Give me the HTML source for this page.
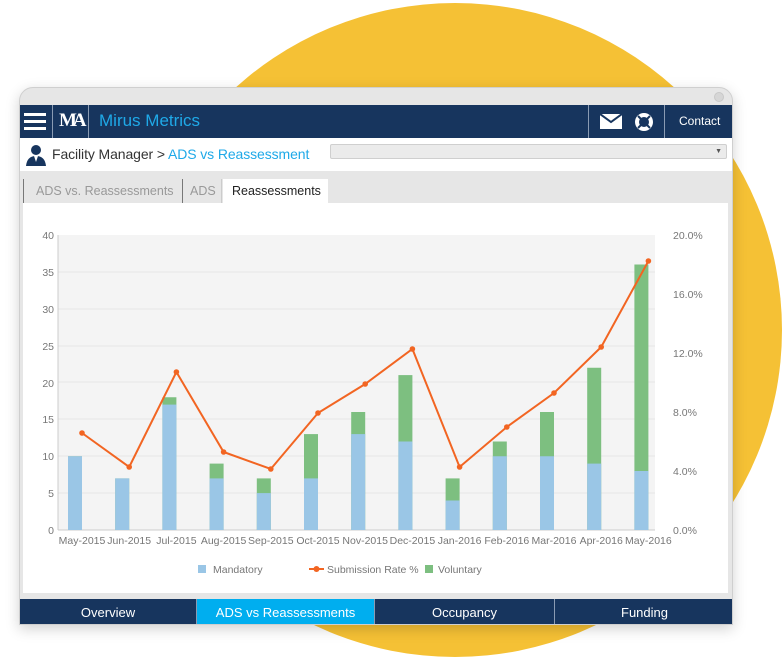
<!DOCTYPE html>
<html><head><meta charset="utf-8"><style>
*{margin:0;padding:0;box-sizing:border-box}
body{width:783px;height:660px;background:#fff;position:relative;overflow:hidden;font-family:"Liberation Sans","DejaVu Sans",sans-serif}
.abs{position:absolute}
#win{left:19px;top:87px;width:714px;height:538px;background:#e6e6e6;border-radius:14px 14px 0 0;box-shadow:0 4px 14px rgba(0,0,0,0.18);border:1px solid #cfcfcf;overflow:hidden}
.hdr{left:0;top:17px;width:714px;height:33px;background:#17355e}
.nav{top:511px;height:27px;background:#17355e;color:#fff;font-size:13px;text-align:center;line-height:27px;border-left:1px solid #8a9bb3}
</style></head><body>
<svg class="abs" style="left:0;top:0" width="783" height="660"><circle cx="455" cy="330" r="327" fill="#f5c135"/></svg>
<div id="win" class="abs">
  <div class="abs" style="right:8px;top:4px;width:10px;height:10px;border-radius:50%;background:#d6d6d6;border:1px solid #c8c8c8"></div>
  <div class="abs hdr">
    <div class="abs" style="left:4px;top:8px;width:22px;height:17px">
      <div style="height:3px;background:#fff;margin-bottom:4px"></div><div style="height:3px;background:#fff;margin-bottom:4px"></div><div style="height:3px;background:#fff"></div>
    </div>
    <div class="abs" style="left:32px;top:0;width:1px;height:33px;background:#8a9bb3"></div>
    <div class="abs" style="left:39px;top:5px;color:#fff;font-family:'Liberation Serif',serif;font-weight:bold;font-size:19px;letter-spacing:-4px">MA</div>
    <div class="abs" style="left:68px;top:0;width:1px;height:33px;background:#8a9bb3"></div>
    <div class="abs" style="left:79px;top:6px;color:#1fa9e8;font-size:17px">Mirus Metrics</div>
    <div class="abs" style="left:568px;top:0;width:1px;height:33px;background:#8a9bb3"></div>
    <svg class="abs" style="left:580px;top:9px" width="22" height="15"><rect x="0" y="0" width="22" height="15" fill="#fff"/><path d="M0 0 L11 8 L22 0" stroke="#17355e" stroke-width="2" fill="none"/></svg>
    <svg class="abs" style="left:614px;top:7px" width="20" height="20"><circle cx="10" cy="10" r="7" fill="none" stroke="#fff" stroke-width="4"/><path d="M4 4L7 7M16 4L13 7M4 16L7 13M16 16L13 13" stroke="#17355e" stroke-width="2"/></svg>
    <div class="abs" style="left:644px;top:0;width:1px;height:33px;background:#8a9bb3"></div>
    <div class="abs" style="left:659px;top:9px;color:#fff;font-size:12px">Contact</div>
  </div>
  <div class="abs" style="left:0;top:50px;width:714px;height:33px;background:#fff">
    <svg class="abs" style="left:5px;top:6px" width="22" height="22"><circle cx="11" cy="6" r="5" fill="#17355e"/><path d="M1 22 Q2 12 11 12 Q20 12 21 22 Z" fill="#17355e"/><path d="M9 12 L11 18 L13 12Z" fill="#fff"/></svg>
    <div class="abs" style="left:32px;top:8px;font-size:14px;letter-spacing:-0.1px;color:#333">Facility Manager &gt; <span style="color:#1fa9e8">ADS vs Reassessment</span></div>
    <div class="abs" style="left:310px;top:6px;width:397px;height:15px;background:#ebebeb;border:1px solid #cfcfcf;border-radius:2px"><div class="abs" style="right:4px;top:3px;font-size:7px;color:#555">▼</div></div>
  </div>
  <div class="abs" style="left:3px;top:91px;width:160px;height:24px;border-left:1px solid #777;border-right:1px solid #777;color:#999;font-size:12.5px;line-height:24px;padding-left:12px">ADS vs. Reassessments</div>
  <div class="abs" style="left:164px;top:91px;width:38px;height:24px;border-right:1px solid #ccc;color:#999;font-size:12.5px;line-height:24px;padding-left:6px">ADS</div>
  <div class="abs" style="left:203px;top:91px;width:105px;height:24px;background:#fff;color:#222;font-size:12.5px;line-height:24px;padding-left:9px">Reassessments</div>
  <div class="abs" style="left:3px;top:115px;width:705px;height:390px;background:#fff"></div>
  <div class="abs nav" style="left:0;width:176px;border-left:none">Overview</div>
  <div class="abs nav" style="left:176px;width:178px;background:#00aeef">ADS vs Reassessments</div>
  <div class="abs nav" style="left:354px;width:180px">Occupancy</div>
  <div class="abs nav" style="left:534px;width:180px">Funding</div>
</div>
<svg class="abs" style="left:0;top:0" width="783" height="660" font-family="Liberation Sans, sans-serif" font-size="10.5" fill="#777">
<rect x="58" y="235" width="597" height="295" fill="#f4f4f4"/>
<g stroke="#e6e6e6" stroke-width="1">
<line x1="58" x2="655" y1="493" y2="493"/><line x1="58" x2="655" y1="456" y2="456"/><line x1="58" x2="655" y1="419" y2="419"/><line x1="58" x2="655" y1="382" y2="382"/><line x1="58" x2="655" y1="346" y2="346"/><line x1="58" x2="655" y1="309" y2="309"/><line x1="58" x2="655" y1="272" y2="272"/>
</g>
<line x1="58" x2="58" y1="235" y2="530" stroke="#ccc"/>
<line x1="58" x2="655" y1="530" y2="530" stroke="#ccc"/>
<g text-anchor="end">
<text x="54" y="534">0</text><text x="54" y="497">5</text><text x="54" y="460">10</text><text x="54" y="423">15</text><text x="54" y="387">20</text><text x="54" y="350">25</text><text x="54" y="313">30</text><text x="54" y="276">35</text><text x="54" y="239">40</text>
</g>
<g>
<text x="673" y="534">0.0%</text><text x="673" y="475">4.0%</text><text x="673" y="416">8.0%</text><text x="673" y="357">12.0%</text><text x="673" y="298">16.0%</text><text x="673" y="239">20.0%</text>
</g>
<g fill="#7dbf80">
<rect x="68" y="456.25" width="14" height="73.75"/><rect x="115.2" y="478.4" width="14" height="51.6"/><rect x="162.4" y="397.25" width="14" height="132.75"/><rect x="209.6" y="463.6" width="14" height="66.4"/><rect x="256.8" y="478.4" width="14" height="51.6"/><rect x="304" y="434.1" width="14" height="95.9"/><rect x="351.2" y="412" width="14" height="118"/><rect x="398.4" y="375.1" width="14" height="154.9"/><rect x="445.6" y="478.4" width="14" height="51.6"/><rect x="492.8" y="441.5" width="14" height="88.5"/><rect x="540" y="412" width="14" height="118"/><rect x="587.2" y="367.75" width="14" height="162.25"/><rect x="634.4" y="264.5" width="14" height="265.5"/>
</g>
<g fill="#9ac6e6">
<rect x="68" y="456.25" width="14" height="73.75"/><rect x="115.2" y="478.4" width="14" height="51.6"/><rect x="162.4" y="404.6" width="14" height="125.4"/><rect x="209.6" y="478.4" width="14" height="51.6"/><rect x="256.8" y="493.1" width="14" height="36.9"/><rect x="304" y="478.4" width="14" height="51.6"/><rect x="351.2" y="434.1" width="14" height="95.9"/><rect x="398.4" y="441.5" width="14" height="88.5"/><rect x="445.6" y="500.5" width="14" height="29.5"/><rect x="492.8" y="456.25" width="14" height="73.75"/><rect x="540" y="456.25" width="14" height="73.75"/><rect x="587.2" y="463.6" width="14" height="66.4"/><rect x="634.4" y="471" width="14" height="59"/>
</g>
<polyline fill="none" stroke="#f26522" stroke-width="2" points="82,433 129.2,467 176.4,372 223.6,452 270.8,469 318,413 365.2,384 412.4,349 459.6,467 506.8,427 554,393 601.2,347 648.4,261"/>
<g fill="#f26522">
<circle cx="82" cy="433" r="2.8"/><circle cx="129.2" cy="467" r="2.8"/><circle cx="176.4" cy="372" r="2.8"/><circle cx="223.6" cy="452" r="2.8"/><circle cx="270.8" cy="469" r="2.8"/><circle cx="318" cy="413" r="2.8"/><circle cx="365.2" cy="384" r="2.8"/><circle cx="412.4" cy="349" r="2.8"/><circle cx="459.6" cy="467" r="2.8"/><circle cx="506.8" cy="427" r="2.8"/><circle cx="554" cy="393" r="2.8"/><circle cx="601.2" cy="347" r="2.8"/><circle cx="648.4" cy="261" r="2.8"/>
</g>
<g text-anchor="middle">
<text x="82" y="544">May-2015</text><text x="129.2" y="544">Jun-2015</text><text x="176.4" y="544">Jul-2015</text><text x="223.6" y="544">Aug-2015</text><text x="270.8" y="544">Sep-2015</text><text x="318" y="544">Oct-2015</text><text x="365.2" y="544">Nov-2015</text><text x="412.4" y="544">Dec-2015</text><text x="459.6" y="544">Jan-2016</text><text x="506.8" y="544">Feb-2016</text><text x="554" y="544">Mar-2016</text><text x="601.2" y="544">Apr-2016</text><text x="648.4" y="544">May-2016</text>
</g>
<rect x="198" y="565" width="8" height="8" fill="#9ac6e6"/><text x="213" y="573">Mandatory</text>
<line x1="309" x2="324" y1="569" y2="569" stroke="#f26522" stroke-width="2"/><circle cx="316.5" cy="569" r="3" fill="#f26522"/><text x="327" y="573">Submission Rate %</text>
<rect x="425" y="565" width="8" height="8" fill="#7dbf80"/><text x="438" y="573">Voluntary</text>
</svg>
</body></html>
